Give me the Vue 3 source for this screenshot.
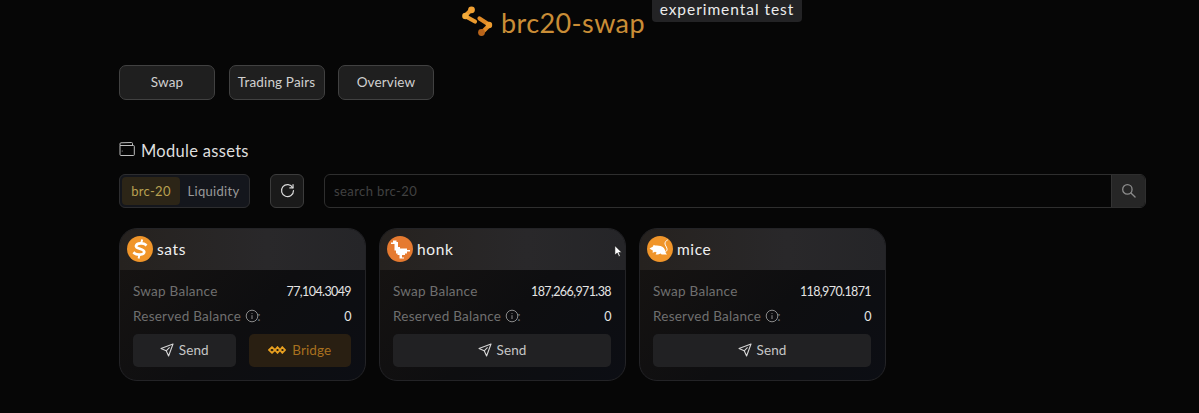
<script setup>
const tokens = [
  { name: 'sats', balance: '77,104.3049', bridge: true },
  { name: 'honk', balance: '187,266,971.38' },
  { name: 'mice', balance: '118,970.1871' },
]
const navItems = ['Swap', 'Trading Pairs', 'Overview']
</script>

<template>
  <div class="page">
    <header class="brand">
      <svg class="logo" viewBox="0 0 32 32" fill="none" stroke-linecap="round" stroke-linejoin="round">
        <g stroke-width="4.2">
          <path d="M9.5 3.5 L3 10 L13 15.5" stroke="#eb9a2e" />
          <path d="M17.5 12.5 L27.5 19 L19.5 27" stroke="#e08a26" />
        </g>
        <circle cx="9.5" cy="3.8" r="3.4" fill="#f0a033" />
        <circle cx="3.4" cy="10" r="3.2" fill="#f4ac3a" />
        <circle cx="27" cy="19" r="3.2" fill="#ee9c30" />
        <circle cx="19.5" cy="26.5" r="3.4" fill="#b8641a" />
      </svg>
      <span class="brand-name">brc20-swap</span>
      <span class="tag">experimental test</span>
    </header>

    <nav class="nav">
      <button v-for="n in navItems" :key="n" class="nav-btn">{{ n }}</button>
    </nav>

    <h2 class="title">
      <svg class="wallet" viewBox="0 0 16 16" fill="none" stroke="#bdbdbd" stroke-width="1">
        <path d="M1 4.5 V13.5 a1 1 0 0 0 1 1 H14.5 a.8 .8 0 0 0 .8 -.8 V5.3 a.8 .8 0 0 0 -.8 -.8 H1 Z" />
        <path d="M1 4.5 V2.8 a1 1 0 0 1 1 -1 L12.5 1.5 a1 1 0 0 1 1 1 V4.5" />
        <circle cx="3.2" cy="10" r=".5" fill="#bdbdbd" stroke="none" />
      </svg>
      Module assets
    </h2>

    <div class="toolbar">
      <div class="tabs">
        <span class="tab active">brc-20</span>
        <span class="tab">Liquidity</span>
      </div>
      <button class="refresh" aria-label="refresh">
        <svg viewBox="0 0 16 16" width="15" height="15" fill="none" stroke="#d9d9d9" stroke-width="1.3" stroke-linecap="round">
          <path d="M13.6 5 A6.4 6.4 0 1 0 14.4 8" />
          <path d="M13.9 1.8 V5.2 H10.5" stroke-linejoin="round" />
        </svg>
      </button>
      <div class="search">
        <span class="placeholder">search brc-20</span>
        <span class="search-btn">
          <svg viewBox="0 0 16 16" width="15" height="15" fill="none" stroke="#8c8c8c" stroke-width="1.4" stroke-linecap="round">
            <circle cx="6.8" cy="6.8" r="5" />
            <path d="M10.6 10.6 L15 15" />
          </svg>
        </span>
      </div>
    </div>

    <section class="cards">
      <article v-for="t in tokens" :key="t.name" class="card">
        <div class="card-head">
          <svg v-if="t.name === 'sats'" class="avatar" viewBox="0 0 26 26">
            <circle cx="13" cy="13" r="13" fill="#f0952a" />
            <path d="M18.5 8.6 C17 7 9.6 6.6 9 10 C8.5 13 17.5 12.4 17.3 16 C17 19.4 9.5 19.2 7.4 17.2" fill="none" stroke="#fff" stroke-width="2.7" stroke-linecap="square" />
            <path d="M15.2 3.6 L14.4 6.6 M12.4 19 L11.6 22.4" stroke="#fff" stroke-width="2" />
          </svg>
          <svg v-else-if="t.name === 'honk'" class="avatar" viewBox="0 0 26 26">
            <circle cx="13" cy="13" r="13" fill="#e57a30" />
            <path fill="#fff" d="M6 4.5 H9.5 V6 H11 V11 H13 V12.5 H20 V14 H23 V15.5 H20 V17.5 H18 V19 H15 V21.5 H17 V22.5 H12.5 V19 H10.5 V17.5 H9 V14.5 H7.5 V8 H4 V6.5 H6 Z" />
          </svg>
          <svg v-else class="avatar" viewBox="0 0 26 26">
            <circle cx="13" cy="13" r="13" fill="#f0952a" />
            <path fill="#fff" d="M2.5 12.5 L6 10.4 L6.5 9 L8.5 9.6 C11 9.2 15 10 16.6 11.8 C18 13.4 18.6 15 18.4 16.4 L20 18.6 H14.6 L13.8 17.6 L11 18.4 H8.6 L9.6 16.6 L8 15.8 L6.6 16.6 H5.4 L6 14.8 Z" />
            <path d="M18.4 16 C22.4 13.6 18.5 10.5 18 8 C17.7 6.4 19 4.6 20.4 4" fill="none" stroke="#fff" stroke-width="1" stroke-linecap="round" />
          </svg>
          <span class="token">{{ t.name }}</span>
        </div>
        <div class="card-body">
          <div class="row">
            <span class="label">Swap Balance</span>
            <span class="value">{{ t.balance }}</span>
          </div>
          <div class="row">
            <span class="label with-icon">
              Reserved Balance
              <svg viewBox="0 0 14 14" width="14" height="14" fill="none" stroke="#8a8a8a" stroke-width="1">
                <circle cx="7" cy="7" r="5.8" />
                <path d="M7 6.2 V10 M7 4 V4.9" />
              </svg>:
            </span>
            <span class="value">0</span>
          </div>
          <div class="actions">
            <button class="action">
              <svg viewBox="0 0 14 14" width="14" height="14" fill="none" stroke="#d5d5d5" stroke-width="1.1" stroke-linejoin="round">
                <path d="M13 1 L1 5.4 L6.2 7.8 L8.6 13 Z" />
                <path d="M6.2 7.8 L9.6 4.4" />
              </svg>
              Send
            </button>
            <button v-if="t.bridge" class="action bridge">
              <svg viewBox="0 0 18 8" width="18" height="8" fill="none" stroke="#e8a020" stroke-width="1.8">
                <path d="M1 4 L4 1.2 L7 4 L4 6.8 Z" />
                <path d="M7 4 L9.5 1.2 L12 4 L9.5 6.8 Z" />
                <path d="M12 4 L14.3 1.2 L17 4 L14.3 6.8 Z" />
              </svg>
              Bridge
            </button>
          </div>
        </div>
      </article>
    </section>

    <svg class="cursor" viewBox="0 0 10 14" width="9" height="13">
      <path d="M1 0.5 V11 L3.6 8.6 L5.4 12.6 L7 11.9 L5.3 8.1 H8.6 Z" fill="#fff" stroke="#111" stroke-width=".6" />
    </svg>
  </div>
</template>

<style>
html, body { margin: 0; background: #060606; }
</style>

<style scoped>
.page {
  position: relative;
  width: 1199px;
  height: 413px;
  box-sizing: border-box;
  padding-left: 119px;
  overflow: hidden;
  background: #060606;
  font-family: Lato, "Open Sans", sans-serif;
  color: #e6e6e6;
}
button { font-family: inherit; padding: 0; cursor: pointer; }

.brand {
  display: flex;
  align-items: flex-start;
  height: 65px;
  padding-left: 343px;
}
.logo { width: 32px; height: 32px; margin-top: 6px; overflow: visible; }
.brand-name {
  margin: 5px 0 0 7px;
  font-size: 27px;
  line-height: 36px;
  letter-spacing: .4px;
  color: #c98d36;
  font-weight: 400;
}
.tag {
  margin-left: 7px;
  height: 22px;
  width: 150px;
  box-sizing: border-box;
  background: #232325;
  border-radius: 0 0 4px 4px;
  font-size: 15.5px;
  line-height: 19px;
  text-align: center;
  letter-spacing: .95px;
  color: #ececec;
}

.nav { display: flex; gap: 13.5px; }
.nav-btn {
  width: 96px;
  height: 34.5px;
  background: #1f1f1f;
  border: 1px solid #414141;
  border-radius: 7px;
  font-size: 13.5px;
  letter-spacing: .15px;
  color: #d0d0d0;
}

.title {
  display: flex;
  align-items: center;
  gap: 6px;
  margin: 41px 0 0;
  height: 20px;
  font-size: 16.5px;
  font-weight: 400;
  letter-spacing: .3px;
  color: #dedede;
}
.wallet { width: 16px; height: 16px; margin-top: -4px; }

.toolbar { display: flex; align-items: stretch; height: 34px; margin-top: 13px; }
.tabs {
  display: flex;
  width: 131px;
  box-sizing: border-box;
  padding: 2px;
  background: #14161c;
  border: 1px solid #2d2d2f;
  border-radius: 6px;
}
.tab {
  flex: 1;
  display: flex;
  align-items: center;
  justify-content: center;
  font-size: 13px;
  letter-spacing: .3px;
  color: #9a9a9a;
}
.tab.active {
  flex: none;
  width: 58px;
  background: #2c2517;
  border-radius: 4px;
  color: #b9a050;
}
.refresh {
  display: flex;
  align-items: center;
  justify-content: center;
  width: 34px;
  margin-left: 20px;
  background: #1a1a1a;
  border: 1px solid #3c3c3c;
  border-radius: 6px;
}
.search {
  display: flex;
  align-items: stretch;
  justify-content: space-between;
  width: 822px;
  margin-left: 20px;
  box-sizing: border-box;
  background: #060606;
  border: 1px solid #2e2e2e;
  border-radius: 6px;
  overflow: hidden;
}
.placeholder {
  align-self: center;
  padding-left: 9px;
  font-size: 13px;
  letter-spacing: .4px;
  color: #414141;
}
.search-btn {
  display: flex;
  align-items: center;
  justify-content: center;
  width: 33px;
  background: #262626;
  border-left: 1px solid #333;
}

.cards { display: flex; gap: 13px; margin-top: 20px; }
.card {
  width: 247px;
  height: 153px;
  box-sizing: border-box;
  border: 1px solid #232326;
  border-radius: 18px;
  overflow: hidden;
  background: linear-gradient(135deg, #171412 0%, #0e0e10 55%, #0c0e14 100%);
}
.card-head {
  display: flex;
  align-items: center;
  gap: 4px;
  height: 41px;
  padding-left: 7px;
  background: linear-gradient(90deg, #26221f 0%, #29282a 60%, #252528 100%);
}
.avatar { width: 26px; height: 26px; flex: none; }
.token { font-size: 15.5px; letter-spacing: .6px; color: #f0f0f0; }
.card-body { padding: 9px 14px 0 13px; }
.row {
  display: flex;
  justify-content: space-between;
  align-items: center;
  height: 25px;
  font-size: 13.5px;
  letter-spacing: .25px;
}
.label { color: #6f6f6f; }
.with-icon { display: flex; align-items: center; gap: 4px; }
.with-icon svg { margin-right: -6px; }
.value { color: #e4e4e4; font-size: 12.5px; letter-spacing: -.6px; }
.actions { display: flex; gap: 13px; margin-top: 5px; }
.action {
  flex: 1;
  display: flex;
  align-items: center;
  justify-content: center;
  gap: 5px;
  height: 33px;
  background: #212123;
  border: 0;
  border-radius: 5px;
  font-size: 13.5px;
  letter-spacing: .1px;
  color: #c6c6c6;
}
.action.bridge { background: #291f12; color: #a8701f; gap: 6px; }
.cursor { position: absolute; left: 614px; top: 245px; }
</style>
